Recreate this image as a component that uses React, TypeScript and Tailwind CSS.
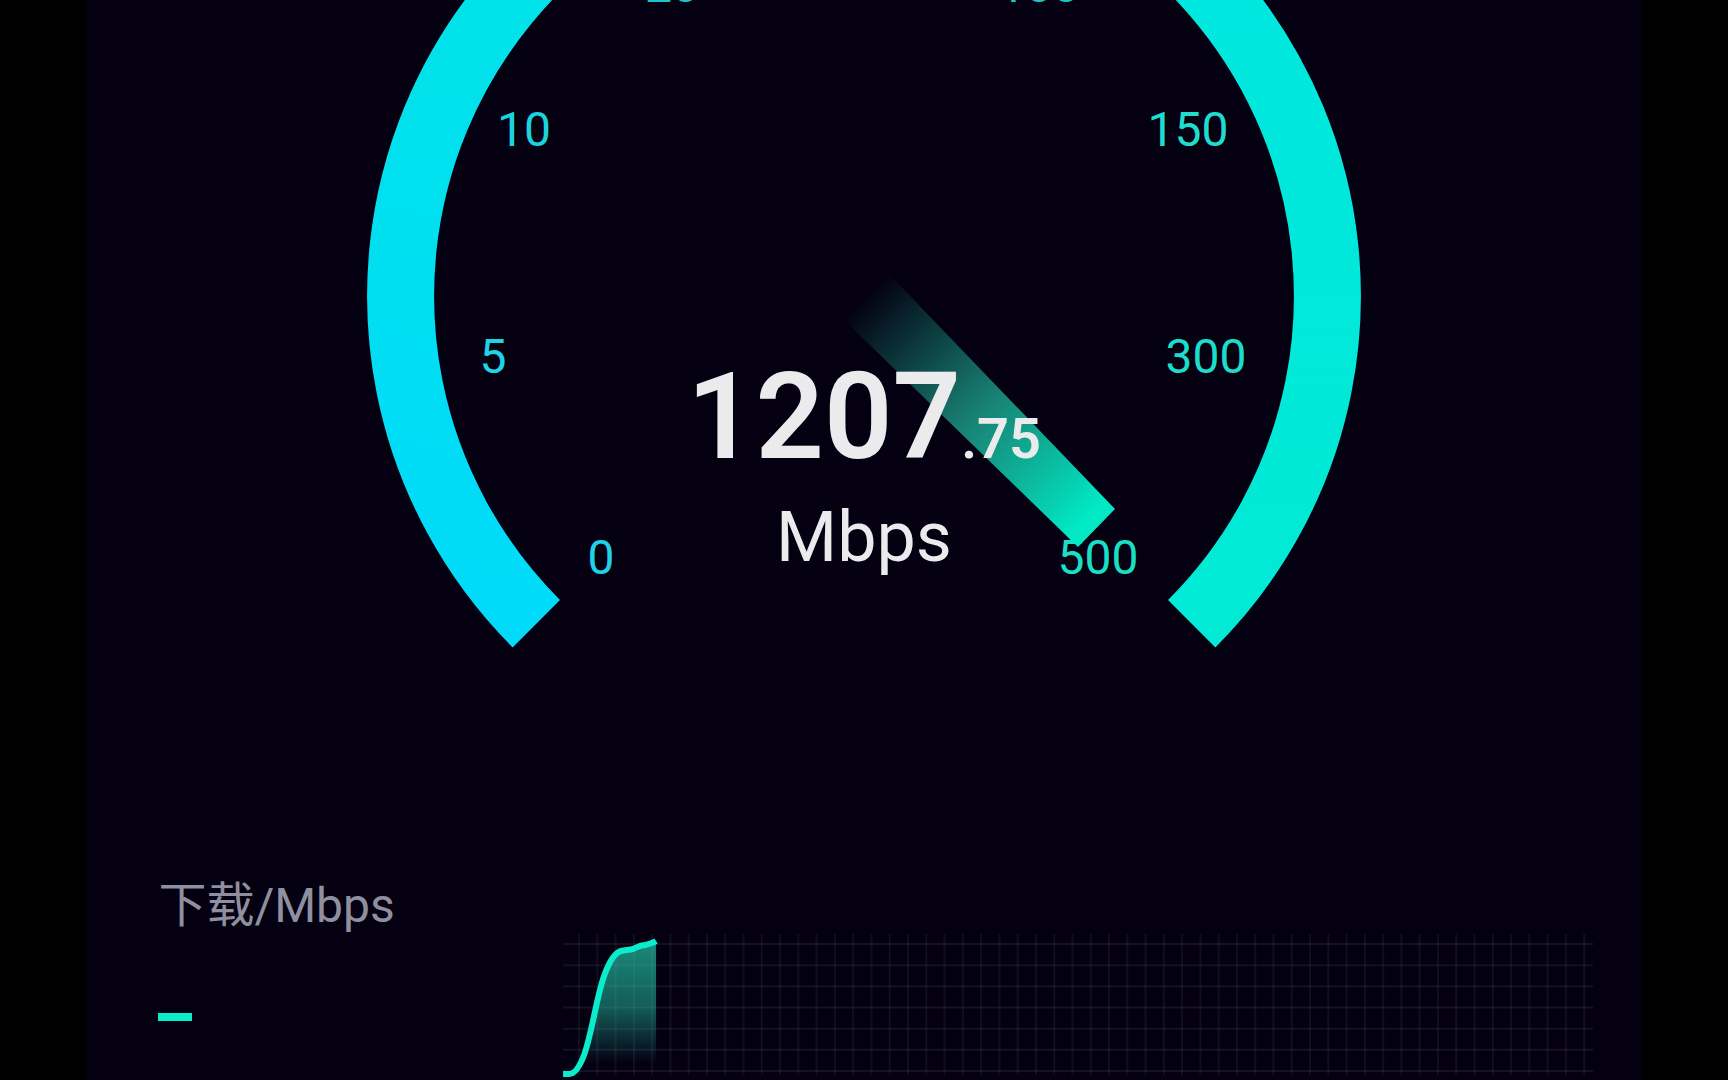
const ticks = [
  { label: "0", x: 234, y: 574, color: "#1fd3e6" },
  { label: "5", x: 126, y: 373, color: "#1fd4e4" },
  { label: "10", x: 157, y: 146, color: "#1bd3de" },
  { label: "20", x: 305, y: 2, color: "#1bc4cc" },
  { label: "100", x: 672, y: 2, color: "#1cc8c4" },
  { label: "150", x: 821, y: 146, color: "#1fdccf" },
  { label: "300", x: 839, y: 373, color: "#1cdccb" },
  { label: "500", x: 731, y: 574, color: "#19dfc6" },
];

const columns = Array.from({ length: 56 }, (_, i) => 16 + (i * 1005) / 55);
const rows = Array.from({ length: 7 }, (_, i) => 11 + (i * 127) / 6);

const curve =
  "M0 141 H6 C13 141 18 130 21 122 C29 100 33 66 41 43 C46 29 51 20 58 18 C62 17 66 17 70 16 C74 14 78 12 82 12 C86 11 90 10 93 8";

function Gauge() {
  return (
    <svg
      viewBox="0 0 994 660"
      className="col-start-1 row-start-1 w-full"
      role="img"
      aria-label="1207.75 Mbps"
    >
      <defs>
        <linearGradient id="arc" gradientUnits="userSpaceOnUse" x1="100" y1="640" x2="300" y2="-160">
          <stop offset="0" stopColor="#00dafa" />
          <stop offset="1" stopColor="#00e5e4" />
        </linearGradient>
        <linearGradient id="arcRight" gradientUnits="userSpaceOnUse" x1="497" y1="0" x2="497" y2="640">
          <stop offset="0" stopColor="#00e7df" />
          <stop offset="1" stopColor="#00ead4" />
        </linearGradient>
        <linearGradient id="needle" gradientUnits="userSpaceOnUse" x1="498" y1="296" x2="730" y2="528">
          <stop offset="0" stopColor="#1a9a88" stopOpacity="0" />
          <stop offset="0.5" stopColor="#1c9a86" stopOpacity="0.85" />
          <stop offset="0.95" stopColor="#00e8c4" />
        </linearGradient>
      </defs>

      <path
        d="M169.3 623.7 A463.5 463.5 0 0 1 497 -167.5"
        fill="none"
        stroke="url(#arc)"
        strokeWidth="67"
      />
      <path
        d="M497 -167.5 A463.5 463.5 0 0 1 824.7 623.7"
        fill="none"
        stroke="url(#arcRight)"
        strokeWidth="67"
      />

      {ticks.map((tick) => (
        <text
          key={tick.label}
          x={tick.x}
          y={tick.y}
          textAnchor="middle"
          fill={tick.color}
          className="text-5xl"
        >
          {tick.label}
        </text>
      ))}

      <path d="M519 271 L748 509 L711 547 L478 321 Z" fill="url(#needle)" />
    </svg>
  );
}

function SpeedChart() {
  return (
    <svg viewBox="0 0 1030 147" className="mt-[51px] min-w-0 flex-1">
      <defs>
        <linearGradient id="area" x1="0" y1="0" x2="0" y2="1">
          <stop offset="0" stopColor="#1c9a86" stopOpacity="0.9" />
          <stop offset="0.5" stopColor="#1c9a86" stopOpacity="0.6" />
          <stop offset="0.92" stopColor="#1c9a86" stopOpacity="0" />
        </linearGradient>
      </defs>
      <path d={`${curve} V141 Z`} fill="url(#area)" />
      {columns.map((x) => (
        <line key={x} x1={x} x2={x} y1="1" y2="142" stroke="#9a9ac8" strokeOpacity="0.09" strokeWidth="2" />
      ))}
      {rows.map((y) => (
        <line key={y} x1="0" x2="1030" y1={y} y2={y} stroke="#9a9ac8" strokeOpacity="0.11" strokeWidth="2" />
      ))}
      <path d={curve} fill="none" stroke="#0beccb" strokeWidth="6" />
    </svg>
  );
}

export default function App() {
  return (
    <main className="min-h-screen bg-black px-[5%] font-['Roboto','Noto_Sans_CJK_SC',sans-serif]">
      <div className="flex min-h-screen flex-col bg-[#040011]">
        <section className="mx-auto grid w-[994px] max-w-full">
          <Gauge />
          <div className="col-start-1 row-start-1 flex flex-col items-center pt-[359px] text-[#ebebed]">
            <p className="flex items-baseline font-semibold">
              <span className="text-[120px] leading-[116px]">1207</span>
              <span className="text-[56px]">.75</span>
            </p>
            <p className="mt-5 text-[70px] leading-[72px]">Mbps</p>
          </div>
        </section>

        <section className="mt-auto flex items-start pr-12 pl-[72px]">
          <div className="w-[405px] shrink-0">
            <h2 className="text-5xl text-[#8f8f9f]">下载/Mbps</h2>
            <div className="mt-[83px] h-2 w-[34px] bg-[#0beccb]" />
          </div>
          <SpeedChart />
        </section>
      </div>
    </main>
  );
}
